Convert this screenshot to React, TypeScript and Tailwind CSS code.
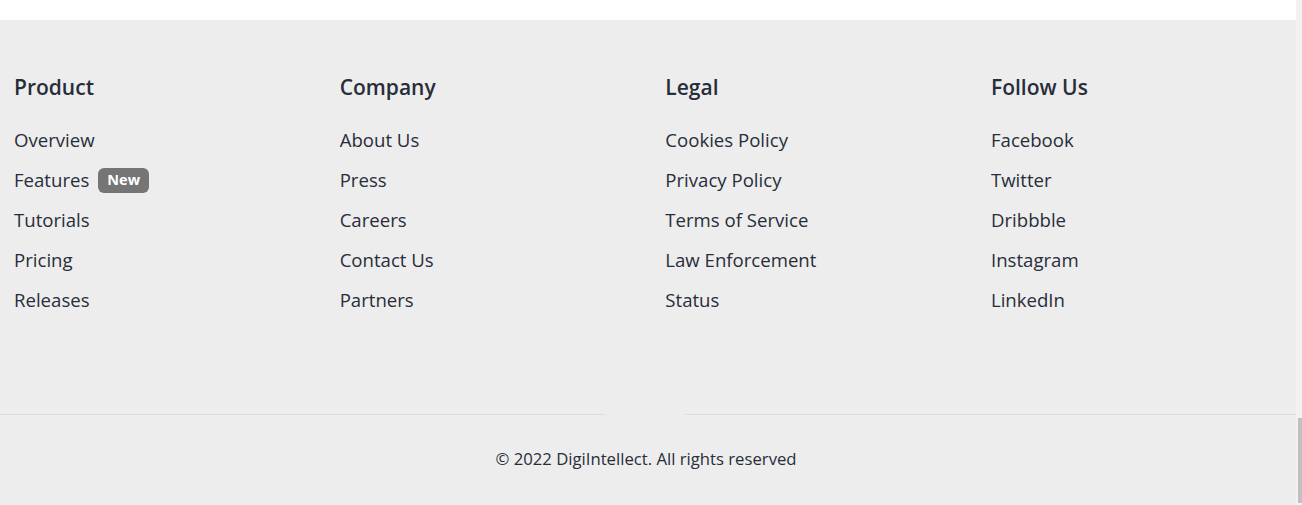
const columns = [
  { title: 'Product', links: ['Overview', 'Features', 'Tutorials', 'Pricing', 'Releases'] },
  { title: 'Company', links: ['About Us', 'Press', 'Careers', 'Contact Us', 'Partners'] },
  { title: 'Legal', links: ['Cookies Policy', 'Privacy Policy', 'Terms of Service', 'Law Enforcement', 'Status'] },
  { title: 'Follow Us', links: ['Facebook', 'Twitter', 'Dribbble', 'Instagram', 'LinkedIn'] },
];

export default function App() {
  return (
    <div className="flex h-[505px] w-[1302px] overflow-hidden" style={{ fontFamily: '"Open Sans", "Noto Sans", sans-serif' }}>
      <div className="flex w-[1296px] flex-col overflow-hidden">
        <div className="h-[20px] bg-white" />
        <footer className="flex flex-1 flex-col bg-[#ededed] text-[#282d3a]">
          <div className="flex pl-[14px] pt-[52px]">
            {columns.map((col) => (
              <div key={col.title} className="w-[325.67px] shrink-0">
                <h3 className="h-[30px] text-[21px] font-semibold leading-[30px]">{col.title}</h3>
                <ul className="mt-[18px] flex flex-col">
                  {col.links.map((l) => (
                    <li key={l} className="flex h-[40px] items-center text-[18.6px]">
                      <a href="#">{l}</a>
                      {l === 'Features' && (
                        <span className="ml-[9px] flex h-[25px] items-center rounded-[6px] bg-[#757575] px-[9px] text-[14.5px] font-bold text-white">
                          New
                        </span>
                      )}
                    </li>
                  ))}
                </ul>
              </div>
            ))}
          </div>
          <div className="mt-auto flex">
            <div className="h-px w-[605px] bg-[#dcdcdc]" />
            <div className="w-[80px]" />
            <div className="h-px flex-1 bg-[#dcdcdc]" />
          </div>
          <p className="flex h-[90px] items-center justify-center pb-[3px] pr-[4px] text-[16.7px]">
            © 2022 DigiIntellect. All rights reserved
          </p>
        </footer>
      </div>
      <div className="flex w-[6px] flex-col justify-end bg-[#f1f1f1] pb-[2px] pl-[2px]">
        <div className="h-[85px] bg-[#c1c1c1]" />
      </div>
    </div>
  );
}
